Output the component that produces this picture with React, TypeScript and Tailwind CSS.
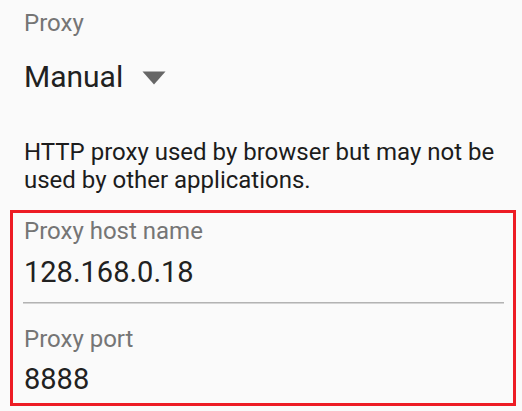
export default function App() {
  return (
    <div className="min-h-[411px] w-[522px] bg-[#fafafa] font-['Roboto',sans-serif] pt-[9px]">
      {/* Proxy mode */}
      <div className="pl-6 pr-4">
        <p className="text-[24px] leading-[28px] text-[#757575]">Proxy</p>
        <div className="mt-[20px] flex items-center h-10">
          <span className="text-[30px] leading-10 text-[#212121]">Manual</span>
          <svg className="ml-[19px] mt-[2px]" width="24" height="14" viewBox="0 0 24 14">
            <path d="M0.5 0.5 L23.5 0.5 L12 13.5 Z" fill="#666666" />
          </svg>
        </div>
        <p className="mt-[41px] text-[24px] leading-[28px] text-[#1c1c1c] pr-[2px]">
          HTTP proxy used by browser but may not be used by other applications.
        </p>
      </div>

      {/* Host / port fields */}
      <div className="ml-[10px] mt-[16px] w-[506px] border-[3px] border-[#ed1c24] pt-[4px] pb-[5px]">
        <div className="pl-[11px]">
          <p className="text-[24px] leading-[28px] text-[#757575]">Proxy host name</p>
          <p className="mt-[8px] text-[29px] leading-[38px] text-[#212121]">128.168.0.18</p>
        </div>
        <div className="mt-[11px] ml-[10px] mr-[9px] h-[2px] border-t border-[#b3b3b3] bg-[#d4d4d4]" />
        <div className="pl-[11px] mt-[21px]">
          <p className="text-[24px] leading-[28px] text-[#757575]">Proxy port</p>
          <p className="mt-[7px] text-[29px] leading-[38px] text-[#212121]">8888</p>
        </div>
      </div>
    </div>
  )
}
